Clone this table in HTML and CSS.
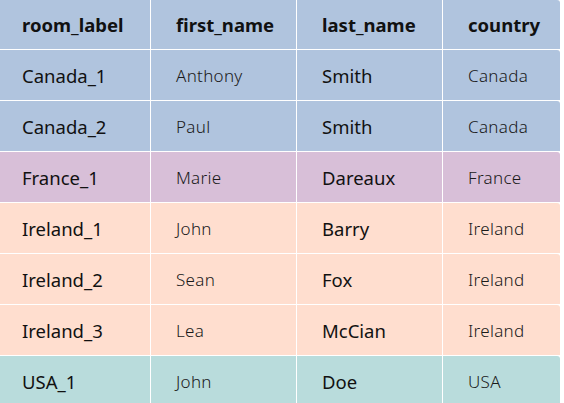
FILE: index.html
```html
<!DOCTYPE html>
<html>
<head>
<meta charset="utf-8">
<link rel="stylesheet" href="styles.css">
</head>
<body>
<table class="rooms">
  <thead>
    <tr class="canada">
      <th class="c1">room_label</th>
      <th class="c2">first_name</th>
      <th class="c3">last_name</th>
      <th class="c4">country</th>
    </tr>
  </thead>
  <tbody>
    <tr class="canada"><td class="c1">Canada_1</td><td class="c2">Anthony</td><td class="c3">Smith</td><td class="c4">Canada</td></tr>
    <tr class="canada"><td class="c1">Canada_2</td><td class="c2">Paul</td><td class="c3">Smith</td><td class="c4">Canada</td></tr>
    <tr class="france"><td class="c1">France_1</td><td class="c2">Marie</td><td class="c3">Dareaux</td><td class="c4">France</td></tr>
    <tr class="ireland"><td class="c1">Ireland_1</td><td class="c2">John</td><td class="c3">Barry</td><td class="c4">Ireland</td></tr>
    <tr class="ireland"><td class="c1">Ireland_2</td><td class="c2">Sean</td><td class="c3">Fox</td><td class="c4">Ireland</td></tr>
    <tr class="ireland"><td class="c1">Ireland_3</td><td class="c2">Lea</td><td class="c3">McCian</td><td class="c4">Ireland</td></tr>
    <tr class="usa"><td class="c1">USA_1</td><td class="c2">John</td><td class="c3">Doe</td><td class="c4">USA</td></tr>
  </tbody>
</table>
</body>
</html>
```
FILE: styles.css
```css
html, body {
  margin: 0;
  padding: 0;
  background: #ffffff;
  overflow: hidden;
}
.rooms {
  border-collapse: separate;
  border-spacing: 1px;
  margin: -1px 0 0 -1px;
  table-layout: fixed;
  width: 560px;
  font-family: "Noto Sans", "DejaVu Sans", sans-serif;
  color: #111111;
}
.rooms th, .rooms td {
  height: 50px;
  padding: 0 0 0 25px;
  text-align: left;
  vertical-align: middle;
  box-sizing: border-box;
  white-space: nowrap;
}
.rooms thead th {
  height: 49px;
  font-weight: 700;
  font-size: 18.5px;
}
.rooms .c1 { width: 150px; padding-left: 22px; }
.rooms .c2 { width: 145px; }
.rooms .c3 { width: 145px; }
.rooms .c4 { width: 117px; border-radius: 0 3px 0 0; }
.rooms td.c1, .rooms td.c3 { font-size: 18.5px; }
.rooms td.c2, .rooms td.c4 { font-size: 17px; font-weight: 300; letter-spacing: 0.3px; color: #1a1a1a; }
.canada > * { background: #b0c4de; }
.france > * { background: #d8bfd8; }
.ireland > * { background: #ffdecf; }
.usa > * { background: #b9dcdc; }
```
